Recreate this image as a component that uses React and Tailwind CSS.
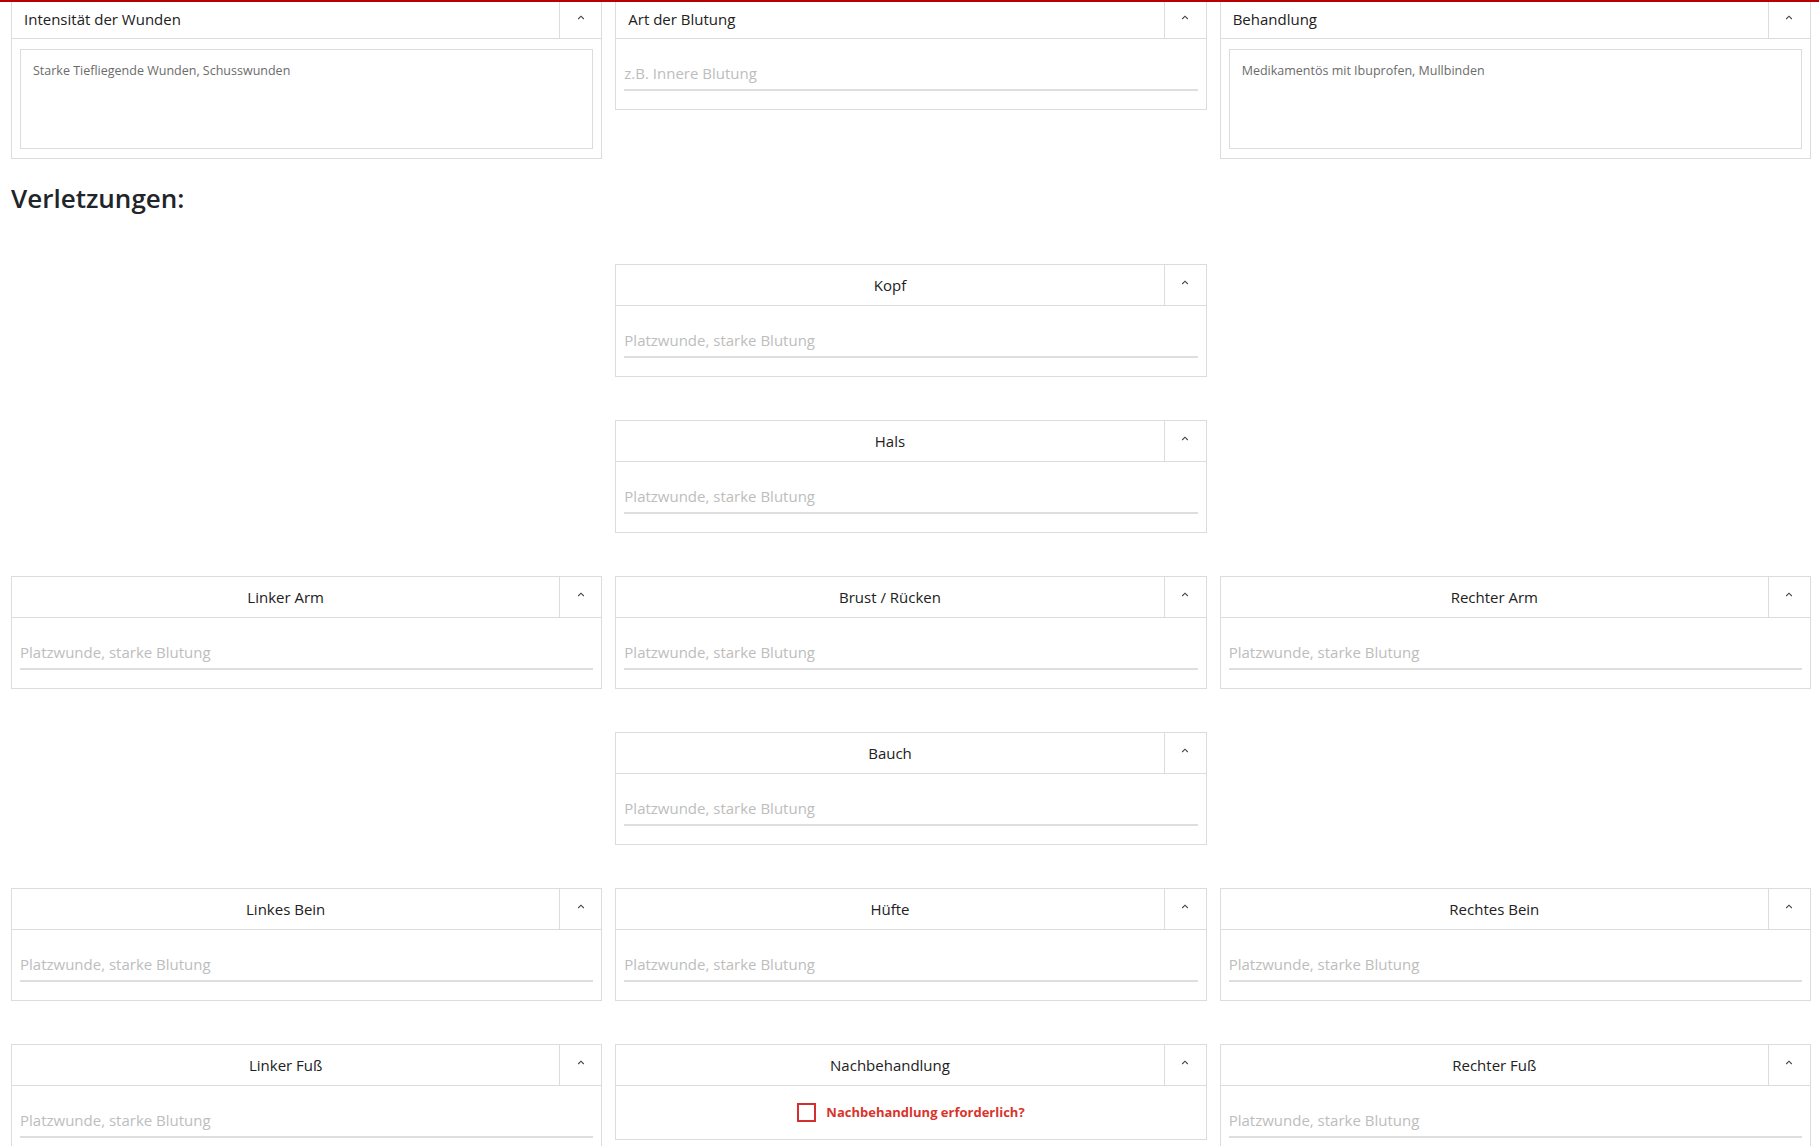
import React from "react";

const Chevron = () => (
  <svg width="8" height="5" viewBox="0 0 8 5" fill="none">
    <polyline points="1.2,4 4,1.2 6.8,4" stroke="#444" strokeWidth="1.1" />
  </svg>
);

/* Header row with title + chevron column */
const Header = ({ title, center, top }) => (
  <div
    className={`flex border-b border-[#dcdcdc] ${top ? "h-[37px]" : "h-[41px]"}`}
  >
    <div
      className={`flex-1 flex items-center border-r border-[#dcdcdc] text-[15px] text-[#212121] ${
        center ? "justify-center" : "pl-[12px] pb-[2px]"
      }`}
    >
      {title}
    </div>
    <div className="w-[41px] flex items-center justify-center pb-[6px]">
      <Chevron />
    </div>
  </div>
);

const Input = ({ placeholder }) => (
  <div className="px-[8px] pt-[22px] pb-[18px]">
    <input
      placeholder={placeholder}
      className="w-full h-[30px] pb-[4px] border-b-2 border-[#dedede] text-[15px] text-[#333] placeholder:text-[#bdbdbd] outline-none bg-transparent"
    />
  </div>
);

const Card = ({ title, center = true, top = false, children }) => (
  <div
    className={`border border-[#dcdcdc] bg-white ${top ? "border-t-0" : ""}`}
  >
    <Header title={title} center={center} top={top} />
    {children}
  </div>
);

const TextCard = ({ title, value }) => (
  <Card title={title} center={false} top>
    <div className="px-[8px] pt-[10px] pb-[9px]">
      <textarea
        defaultValue={value}
        className="w-full h-[100px] border border-[#dcdcdc] px-[12px] py-[12px] text-[12.5px] text-[#6b6b6b] resize-none outline-none block"
      />
    </div>
  </Card>
);

const Injury = ({ title }) => (
  <Card title={title}>
    <Input placeholder="Platzwunde, starke Blutung" />
  </Card>
);

const App = () => {
  return (
    <div className="min-h-screen bg-white border-t-2 border-[#b30000] font-['Open_Sans',sans-serif] pl-[11px] pr-[8px]">
      {/* top row */}
      <div className="grid grid-cols-3 gap-x-[13px] items-start">
        <TextCard
          title="Intensität der Wunden"
          value="Starke Tiefliegende Wunden, Schusswunden"
        />
        <Card title="Art der Blutung" center={false} top>
          <Input placeholder="z.B. Innere Blutung" />
        </Card>
        <TextCard
          title="Behandlung"
          value="Medikamentös mit Ibuprofen, Mullbinden"
        />
      </div>

      <h2 className="mt-[22px] mb-[49px] text-[26px] leading-[34px] font-semibold text-[#212529]">
        Verletzungen:
      </h2>

      {/* body map */}
      <div className="grid grid-cols-3 gap-x-[13px] gap-y-[43px] items-start">
        <div />
        <Injury title="Kopf" />
        <div />

        <div />
        <Injury title="Hals" />
        <div />

        <Injury title="Linker Arm" />
        <Injury title="Brust / Rücken" />
        <Injury title="Rechter Arm" />

        <div />
        <Injury title="Bauch" />
        <div />

        <Injury title="Linkes Bein" />
        <Injury title="Hüfte" />
        <Injury title="Rechtes Bein" />

        <Injury title="Linker Fuß" />
        <Card title="Nachbehandlung">
          <label className="h-[53px] flex items-center justify-center gap-[10px] cursor-pointer">
            <span className="w-[19px] h-[19px] border-2 border-[#d32f2f]" />
            <span className="text-[13px] font-bold text-[#d9342b]">
              Nachbehandlung erforderlich?
            </span>
          </label>
        </Card>
        <Injury title="Rechter Fuß" />
      </div>
    </div>
  );
};

export default App;
